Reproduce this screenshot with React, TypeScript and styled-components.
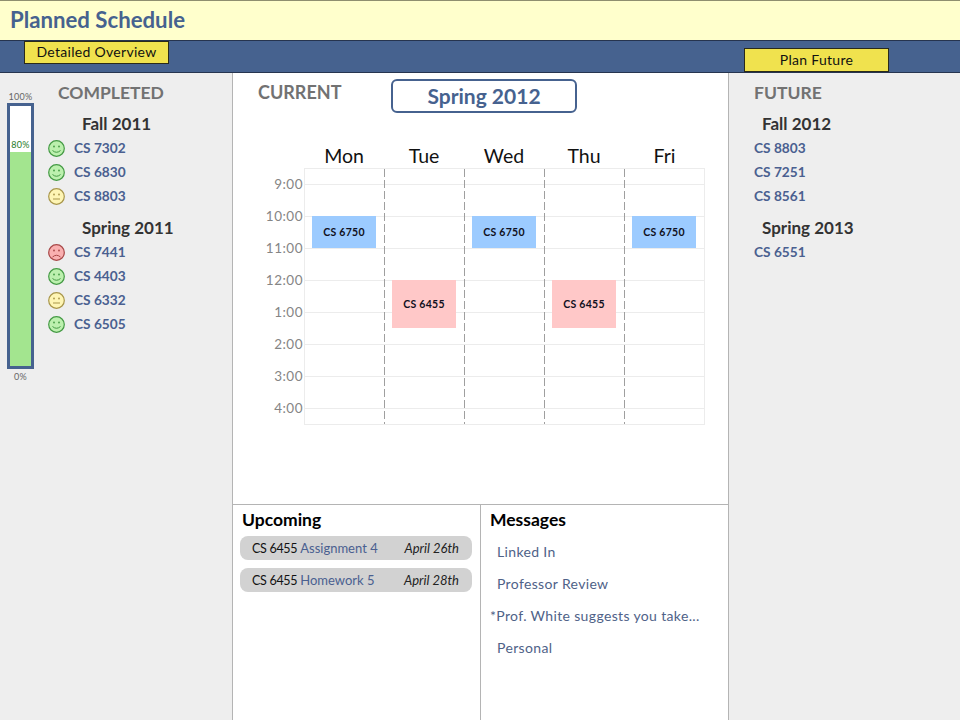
import styled, { createGlobalStyle } from "styled-components";

const GlobalStyle = createGlobalStyle`
    html, body {
        margin: 0;
        padding: 0;
        background: #ffffff;
    }
    body {
        font-family: "Lato", "Open Sans", sans-serif;
    }
`;

const Page = styled.div`
    width: 960px;
    height: 720px;
    display: flex;
    flex-direction: column;
    overflow: hidden;
`;

const TitleBar = styled.header`
    height: 41px;
    box-sizing: border-box;
    padding: 0 0 2px 10px;
    display: flex;
    align-items: center;
    background: #ffffcc;
    border-top: 1px solid #8f8f6f;
    border-bottom: 1px solid #26344f;
    color: #46628f;
    font-size: 22.2px;
    font-weight: 700;
`;

const NavBar = styled.nav`
    height: 32px;
    box-sizing: border-box;
    display: flex;
    align-items: flex-start;
    background: #46628f;
    border-bottom: 1px solid #26344f;
    padding-left: 24px;
`;

const NavTab = styled.div<{ $left?: number; $top?: number; $height: number }>`
    width: 145px;
    height: ${({ $height }) => $height}px;
    box-sizing: border-box;
    margin-left: ${({ $left }) => $left ?? 0}px;
    margin-top: ${({ $top }) => $top ?? 0}px;
    padding-bottom: 2px;
    display: flex;
    align-items: center;
    justify-content: center;
    background: #f0e24e;
    border: 1px solid #2a2a1a;
    color: #111111;
    font-size: 14px;
    letter-spacing: 0.3px;
`;

const Columns = styled.div`
    flex: 1;
    display: flex;
    min-height: 0;
`;

const SideColumn = styled.aside<{ $width: number }>`
    width: ${({ $width }) => $width}px;
    box-sizing: border-box;
    display: flex;
    background: #eeeeee;
`;

const Center = styled.main`
    width: 497px;
    box-sizing: border-box;
    display: flex;
    flex-direction: column;
    background: #ffffff;
    border-left: 1px solid #b4b4b4;
    border-right: 1px solid #b4b4b4;
`;

const Gauge = styled.div`
    width: 27px;
    margin: 16px 0 0 7px;
    display: flex;
    flex-direction: column;
    align-items: center;
    color: #666666;
    font-size: 9px;
    letter-spacing: 0.3px;
`;

const GaugeLabel = styled.div`
    height: 14px;
    box-sizing: border-box;
    padding-top: 1px;
    line-height: 14px;
`;

const GaugeBar = styled.div`
    width: 27px;
    height: 266px;
    flex: none;
    box-sizing: border-box;
    display: flex;
    flex-direction: column;
    background: #ffffff;
    border: 3px solid #46628f;
`;

const GaugeEmpty = styled.div`
    height: 46px;
    display: flex;
    align-items: flex-end;
    justify-content: center;
    color: #1f7a1f;
    line-height: 14px;
`;

const GaugeFill = styled.div`
    flex: 1;
    background: #a3e58f;
`;

const Courses = styled.div<{ $left: number }>`
    margin-left: ${({ $left }) => $left}px;
    padding-top: 7px;
`;

const ColumnHeading = styled.h2<{ $left?: number }>`
    margin: 0 0 0 ${({ $left }) => $left ?? 0}px;
    height: 24px;
    line-height: 26px;
    color: #727272;
    font-size: 17.5px;
    font-weight: 700;
`;

const Term = styled.h3<{ $left: number }>`
    margin: 8px 0 0 ${({ $left }) => $left}px;
    height: 24px;
    line-height: 24px;
    color: #333333;
    font-size: 17px;
    font-weight: 700;
`;

const CourseRow = styled.div`
    height: 24px;
    display: flex;
    align-items: center;
    gap: 9px;
    color: #4a6090;
    font-size: 13.7px;
    font-weight: 700;
`;

const CourseName = styled.span`
    margin-bottom: 2px;
`;

const CurrentHead = styled.div`
    height: 47px;
    box-sizing: border-box;
    padding: 6px 0 0 25px;
    display: flex;
    align-items: flex-start;
`;

const CurrentHeading = styled(ColumnHeading)`
    width: 133px;
    margin-top: 1px;
    line-height: 24px;
    font-size: 18px;
`;

const TermBox = styled.div`
    width: 186px;
    height: 34px;
    box-sizing: border-box;
    padding-bottom: 2px;
    display: flex;
    align-items: center;
    justify-content: center;
    border: 2px solid #46628f;
    border-radius: 6px;
    color: #46628f;
    font-size: 21px;
    font-weight: 700;
`;

const ScheduleArea = styled.div`
    height: 384px;
    padding: 24px 0 0 24px;
    box-sizing: border-box;
    display: grid;
    grid-template-columns: 47px repeat(4, 80px) 81px;
    grid-template-rows: 24px 257px;
`;

const DayName = styled.div`
    padding-bottom: 2px;
    display: flex;
    align-items: center;
    justify-content: center;
    color: #111111;
    font-size: 19.5px;
`;

const Times = styled.div`
    display: flex;
    flex-direction: column;
`;

const TimeLabel = styled.div`
    height: 32px;
    padding-right: 1px;
    display: flex;
    align-items: center;
    justify-content: flex-end;
    color: #858585;
    font-size: 13.5px;
    letter-spacing: 0.5px;
`;

const rowLines = `repeating-linear-gradient(
    to bottom,
    transparent 0,
    transparent 15px,
    #ececec 15px,
    #ececec 16px,
    transparent 16px,
    transparent 32px
)`;

const DayColumn = styled.div<{ $first: boolean; $last: boolean }>`
    position: relative;
    box-sizing: border-box;
    border-top: 1px solid #ececec;
    border-bottom: 1px solid #ececec;
    border-right: ${({ $last }) => ($last ? "1px solid #ececec" : "0")};
    background:
        ${({ $first }) =>
            $first
                ? "linear-gradient(#ececec, #ececec)"
                : "repeating-linear-gradient(to bottom, #9f9f9f 0, #9f9f9f 8px, transparent 8px, transparent 11px)"}
            left top / 1px 100% no-repeat,
        ${rowLines};
`;

const ClassBlock = styled.div<{ $top: number; $height: number; $color: string }>`
    position: absolute;
    left: 8px;
    width: 64px;
    top: ${({ $top }) => $top}px;
    height: ${({ $height }) => $height}px;
    display: flex;
    align-items: center;
    justify-content: center;
    background: ${({ $color }) => $color};
    color: #101020;
    font-size: 10.5px;
    font-weight: 700;
    letter-spacing: 0.3px;
`;

const BottomPanels = styled.div`
    flex: 1;
    display: flex;
    border-top: 1px solid #b4b4b4;
`;

const UpcomingPanel = styled.section`
    width: 248px;
    box-sizing: border-box;
    padding: 4px 8px 0 7px;
    border-right: 1px solid #b4b4b4;
`;

const MessagesPanel = styled.section`
    flex: 1;
    padding: 4px 8px 0 9px;
`;

const PanelTitle = styled.h4<{ $indent?: number }>`
    margin: 0 0 5px ${({ $indent }) => $indent ?? 0}px;
    height: 22px;
    line-height: 22px;
    color: #000000;
    font-size: 17.5px;
    font-weight: 700;
`;

const DuePill = styled.div`
    height: 24px;
    margin-bottom: 8px;
    padding: 0 13px 0 12px;
    display: flex;
    align-items: center;
    gap: 3px;
    border-radius: 8px;
    background: #d2d2d2;
    color: #111111;
    font-size: 12.5px;
    letter-spacing: -0.3px;
`;

const DueName = styled.span`
    color: #4a6090;
    font-size: 13px;
    letter-spacing: 0;
`;

const DueDate = styled.span`
    margin-left: auto;
    color: #222222;
    font-size: 13px;
    font-style: italic;
    letter-spacing: 0;
`;

const MessageList = styled.div`
    margin-top: -1px;
`;

const Message = styled.div<{ $indent: boolean }>`
    height: 32px;
    display: flex;
    align-items: center;
    padding-left: ${({ $indent }) => ($indent ? 7 : 0)}px;
    color: #4f6288;
    font-size: 14px;
    letter-spacing: 0.35px;
`;

type Mood = "happy" | "meh" | "sad";

const moodColors: Record<Mood, { fill: string; stroke: string }> = {
    happy: { fill: "#bcf0ae", stroke: "#449a44" },
    meh: { fill: "#fef5b4", stroke: "#a8964a" },
    sad: { fill: "#f9b0b0", stroke: "#a84848" },
};

const mouths: Record<Mood, string> = {
    happy: "M4.5 10.5 Q8.5 14 12.5 10.5",
    meh: "M5 11 H12",
    sad: "M4.5 13 Q8.5 9.5 12.5 13",
};

function Smiley({ mood }: { mood: Mood }) {
    const { fill, stroke } = moodColors[mood];
    return (
        <svg width="17" height="17" viewBox="0 0 17 17">
            <circle cx="8.5" cy="8.5" r="7.8" fill={fill} stroke={stroke} strokeWidth="1.2" />
            <circle cx="6" cy="6.5" r="0.9" fill={stroke} />
            <circle cx="11" cy="6.5" r="0.9" fill={stroke} />
            <path d={mouths[mood]} fill="none" stroke={stroke} strokeWidth="1" />
        </svg>
    );
}

const completed: { term: string; courses: [string, Mood][] }[] = [
    {
        term: "Fall 2011",
        courses: [
            ["CS 7302", "happy"],
            ["CS 6830", "happy"],
            ["CS 8803", "meh"],
        ],
    },
    {
        term: "Spring 2011",
        courses: [
            ["CS 7441", "sad"],
            ["CS 4403", "happy"],
            ["CS 6332", "meh"],
            ["CS 6505", "happy"],
        ],
    },
];

const future = [
    { term: "Fall 2012", courses: ["CS 8803", "CS 7251", "CS 8561"] },
    { term: "Spring 2013", courses: ["CS 6551"] },
];

const days = ["Mon", "Tue", "Wed", "Thu", "Fri"];
const times = ["9:00", "10:00", "11:00", "12:00", "1:00", "2:00", "3:00", "4:00"];

const MWF = { name: "CS 6750", top: 47, height: 32, color: "#9ccbff" };
const TR = { name: "CS 6455", top: 111, height: 48, color: "#ffc8c8" };
const schedule = [MWF, TR, MWF, TR, MWF];

const messages = ["Linked In", "Professor Review", "*Prof. White suggests you take...", "Personal"];

export default function App() {
    return (
        <Page>
            <GlobalStyle />
            <TitleBar>Planned Schedule</TitleBar>
            <NavBar>
                <NavTab $height={23}>Detailed Overview</NavTab>
                <NavTab $left={575} $top={7} $height={24}>Plan Future</NavTab>
            </NavBar>
            <Columns>
                <SideColumn $width={232}>
                    <Gauge>
                        <GaugeLabel>100%</GaugeLabel>
                        <GaugeBar>
                            <GaugeEmpty>80%</GaugeEmpty>
                            <GaugeFill />
                        </GaugeBar>
                        <GaugeLabel>0%</GaugeLabel>
                    </Gauge>
                    <Courses $left={14}>
                        <ColumnHeading $left={10}>COMPLETED</ColumnHeading>
                        {completed.map((group) => (
                            <section key={group.term}>
                                <Term $left={34}>{group.term}</Term>
                                {group.courses.map(([name, mood]) => (
                                    <CourseRow key={name}>
                                        <Smiley mood={mood} />
                                        <CourseName>{name}</CourseName>
                                    </CourseRow>
                                ))}
                            </section>
                        ))}
                    </Courses>
                </SideColumn>
                <Center>
                    <CurrentHead>
                        <CurrentHeading>CURRENT</CurrentHeading>
                        <TermBox>Spring 2012</TermBox>
                    </CurrentHead>
                    <ScheduleArea>
                        <div />
                        {days.map((day) => (
                            <DayName key={day}>{day}</DayName>
                        ))}
                        <Times>
                            {times.map((time) => (
                                <TimeLabel key={time}>{time}</TimeLabel>
                            ))}
                        </Times>
                        {schedule.map((item, i) => (
                            <DayColumn key={days[i]} $first={i === 0} $last={i === 4}>
                                <ClassBlock $top={item.top} $height={item.height} $color={item.color}>
                                    {item.name}
                                </ClassBlock>
                            </DayColumn>
                        ))}
                    </ScheduleArea>
                    <BottomPanels>
                        <UpcomingPanel>
                            <PanelTitle $indent={2}>Upcoming</PanelTitle>
                            <DuePill>
                                CS 6455 <DueName>Assignment 4</DueName>
                                <DueDate>April 26th</DueDate>
                            </DuePill>
                            <DuePill>
                                CS 6455 <DueName>Homework 5</DueName>
                                <DueDate>April 28th</DueDate>
                            </DuePill>
                        </UpcomingPanel>
                        <MessagesPanel>
                            <PanelTitle>Messages</PanelTitle>
                            <MessageList>
                                {messages.map((text) => (
                                    <Message key={text} $indent={!text.startsWith("*")}>
                                        {text}
                                    </Message>
                                ))}
                            </MessageList>
                        </MessagesPanel>
                    </BottomPanels>
                </Center>
                <SideColumn $width={231}>
                    <Courses $left={25}>
                        <ColumnHeading>FUTURE</ColumnHeading>
                        {future.map((group) => (
                            <section key={group.term}>
                                <Term $left={8}>{group.term}</Term>
                                {group.courses.map((name) => (
                                    <CourseRow key={name}>
                                        <CourseName>{name}</CourseName>
                                    </CourseRow>
                                ))}
                            </section>
                        ))}
                    </Courses>
                </SideColumn>
            </Columns>
        </Page>
    );
}
